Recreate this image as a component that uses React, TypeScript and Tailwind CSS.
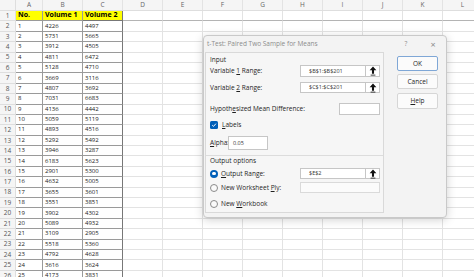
import React from 'react';

const data: [string, string, string][] = [
  ['1', '4226', '4497'],
  ['2', '5731', '5665'],
  ['3', '3912', '4505'],
  ['4', '4811', '6472'],
  ['5', '5128', '4710'],
  ['6', '3669', '3116'],
  ['7', '4807', '3692'],
  ['8', '7031', '6683'],
  ['9', '4136', '4442'],
  ['10', '5059', '5119'],
  ['11', '4893', '4516'],
  ['12', '5292', '5492'],
  ['13', '3946', '3287'],
  ['14', '6183', '5623'],
  ['15', '2901', '5300'],
  ['16', '4632', '5005'],
  ['17', '3655', '3601'],
  ['18', '3551', '3851'],
  ['19', '3902', '4302'],
  ['20', '5089', '4932'],
  ['21', '3109', '2905'],
  ['22', '5518', '5360'],
  ['23', '4792', '4628'],
  ['24', '3616', '3624'],
  ['25', '4173', '3831'],
];

const extraCols = ['D', 'E', 'F', 'G', 'H', 'I', 'J', 'K', 'L'];

function UpArrow() {
  return (
    <svg width="8" height="10" viewBox="0 0 10 12">
      <path d="M5 0.5 L9.2 5.2 H6.3 V9.3 H3.7 V5.2 H0.8 Z" fill="#111" />
      <rect x="2" y="10.6" width="6" height="1" fill="#111" />
    </svg>
  );
}

function RangeBox({ value, disabled }: { value?: string; disabled?: boolean }) {
  return (
    <div
      className={
        'flex w-[80px] h-full border ' +
        (disabled ? 'border-[#dadada] bg-[#fbfbfb]' : 'border-[#c6c6c6] bg-white')
      }
    >
      <div className="flex-1 flex items-center pl-[8px] text-[5.5px] text-[#333]">{value}</div>
      {!disabled && (
        <div className="w-[14px] border-l border-[#c6c6c6] flex items-center justify-center">
          <UpArrow />
        </div>
      )}
    </div>
  );
}

function Radio({ checked }: { checked?: boolean }) {
  return checked ? (
    <div className="w-[8px] h-[8px] rounded-full bg-[#005fb8] flex items-center justify-center">
      <div className="w-[3.5px] h-[3.5px] rounded-full bg-white" />
    </div>
  ) : (
    <div className="w-[8px] h-[8px] rounded-full border border-[#8a8a8a] bg-[#fafafa]" />
  );
}

function Sheet() {
  return (
    <div className="flex flex-col" style={{ fontFamily: '"Open Sans", "Liberation Sans", sans-serif' }}>
      {/* column letters */}
      <div className="flex h-[11px] bg-[#f5f5f5] text-[6.5px] text-[#666] border-b border-[#dedede]">
        <div className="w-[16px] shrink-0 border-r border-[#dedede]" />
        {['A', 'B', 'C', ...extraCols].map((c, i) => (
          <div
            key={c}
            className={
              'shrink-0 flex items-center justify-center border-r border-[#e3e3e3] ' +
              (i === 0 ? 'w-[27px]' : 'w-[40px]')
            }
          >
            {c}
          </div>
        ))}
      </div>
      {/* header row */}
      <div className="flex h-[10.4px]">
        <div className="w-[16px] shrink-0 flex items-center justify-center bg-[#f5f5f5] text-[6.5px] text-[#555] border-r border-b border-[#dedede]">
          1
        </div>
        <div className="w-[27px] shrink-0 bg-[#ffff00] border-r border-b border-[#9a9a9a] pl-[2px] flex items-center text-[7px] font-bold text-black">
          No.
        </div>
        <div className="w-[40px] shrink-0 bg-[#ffff00] border-r border-b border-[#9a9a9a] pl-[2px] flex items-center text-[7px] font-bold text-black">
          Volume 1
        </div>
        <div className="w-[40px] shrink-0 bg-[#ffff00] border-r border-b border-[#777] pl-[2px] flex items-center text-[7px] font-bold text-black">
          Volume 2
        </div>
        {extraCols.map((c) => (
          <div key={c} className="w-[40px] shrink-0 border-r border-r-[#e3e3e3] border-b border-b-[#b4b4b4]" />
        ))}
      </div>
      {data.map(([n, a, b], r) => (
        <div key={n} className="flex h-[10.4px]">
          <div className="w-[16px] shrink-0 flex items-center justify-center bg-[#f5f5f5] text-[6.5px] text-[#555] border-r border-b border-[#dedede]">
            {r + 2}
          </div>
          <div className="w-[27px] shrink-0 border-r border-b border-[#9a9a9a] pl-[2px] flex items-center text-[6px] text-[#222]">
            {n}
          </div>
          <div className="w-[40px] shrink-0 border-r border-b border-[#9a9a9a] pl-[2px] flex items-center text-[6px] text-[#222]">
            {a}
          </div>
          <div className="w-[40px] shrink-0 border-r border-r-[#777] border-b border-b-[#9a9a9a] pl-[2px] flex items-center text-[6px] text-[#222]">
            {b}
          </div>
          {extraCols.map((c) => (
            <div key={c} className="w-[40px] shrink-0 border-r border-b border-[#e3e3e3]" />
          ))}
        </div>
      ))}
    </div>
  );
}

function Dialog() {
  return (
    <div
      className="absolute left-[203px] top-[35px] w-[244px] h-[183px] rounded-[4px] border border-[#c9c9c9] bg-[#f3f3f3] shadow-[0_2px_10px_rgba(0,0,0,0.18)] flex flex-col text-[6.5px] text-[#1f1f1f]"
      style={{ fontFamily: '"Open Sans", "Noto Sans", sans-serif' }}
    >
      {/* title bar */}
      <div className="h-[16px] flex items-center pl-[3px] text-[#8c8c8c]">
        <span className="flex-1">t-Test: Paired Two Sample for Means</span>
        <span className="w-[10px] text-center mr-[17px]">?</span>
        <span className="w-[10px] text-center mr-[8px] text-[9px] leading-none">×</span>
      </div>
      <div className="flex flex-1 pb-[4px]">
        {/* main panel */}
        <div className="ml-[1px] w-[179px] h-full border border-[#d9d9d9] bg-[#f6f6f6] flex flex-col pl-[4px] pr-[3px] pt-[2px]">
          <div className="h-[10px] flex items-center">Input</div>
          <div className="h-[12px] flex items-center">
            <span className="flex-1">
              Variable <u>1</u> Range:
            </span>
            <RangeBox value="$B$1:$B$201" />
          </div>
          <div className="h-[11px] mt-[5px] flex items-center">
            <span className="flex-1">
              Variable <u>2</u> Range:
            </span>
            <RangeBox value="$C$1:$C$201" />
          </div>
          <div className="h-[12px] mt-[10px] flex items-center">
            <span className="flex-1">
              Hypoth<u>e</u>sized Mean Difference:
            </span>
            <div className="w-[41px] h-full border border-[#c6c6c6] bg-white" />
          </div>
          <div className="h-[8px] mt-[6px] flex items-center gap-[4px]">
            <div className="w-[8px] h-[8px] rounded-[1.5px] bg-[#005fb8] flex items-center justify-center">
              <svg width="6" height="6" viewBox="0 0 10 10">
                <path d="M2 5.2 L4.2 7.3 L8.2 2.8" stroke="#fff" strokeWidth="1.6" fill="none" />
              </svg>
            </div>
            <span>
              <u>L</u>abels
            </span>
          </div>
          <div className="h-[14px] mt-[7px] flex items-center">
            <span className="w-[14px]">
              <u>A</u>lpha:
            </span>
            <div className="ml-[4px] w-[40px] h-full border border-[#c6c6c6] bg-white flex items-center pl-[4px] text-[5.5px] text-[#333]">
              0.05
            </div>
          </div>
          <div className="mt-[5px] -ml-[4px] -mr-[3px] border-t border-[#dcdcdc]" />
          <div className="h-[10px] flex items-center">Output options</div>
          <div className="h-[11px] mt-[2px] flex items-center">
            <span className="flex-1 flex items-center gap-[3px]">
              <Radio checked />
              <span>
                <u>O</u>utput Range:
              </span>
            </span>
            <RangeBox value="$E$2" />
          </div>
          <div className="h-[11px] mt-[3px] flex items-center">
            <span className="flex-1 flex items-center gap-[3px]">
              <Radio />
              <span>
                New Worksheet <u>P</u>ly:
              </span>
            </span>
            <RangeBox disabled />
          </div>
          <div className="h-[12px] mt-[5px] flex items-center gap-[3px]">
            <Radio />
            <span>
              New <u>W</u>orkbook
            </span>
          </div>
        </div>
        {/* buttons */}
        <div className="ml-[13px] w-[41px] flex flex-col pt-[4px]">
          <div className="h-[15px] rounded-[2px] border border-[#7fa7d6] bg-[#fbfbfb] flex items-center justify-center">
            OK
          </div>
          <div className="h-[15px] mt-[3px] rounded-[2px] border border-[#d6d6d6] bg-[#fbfbfb] flex items-center justify-center">
            Cancel
          </div>
          <div className="h-[16px] mt-[4px] rounded-[2px] border border-[#d6d6d6] bg-[#fbfbfb] flex items-center justify-center">
            <span>
              <u>H</u>elp
            </span>
          </div>
        </div>
      </div>
    </div>
  );
}

export default function App() {
  return (
    <div className="relative w-[474px] h-[277px] overflow-hidden bg-white">
      <Sheet />
      <Dialog />
    </div>
  );
}
